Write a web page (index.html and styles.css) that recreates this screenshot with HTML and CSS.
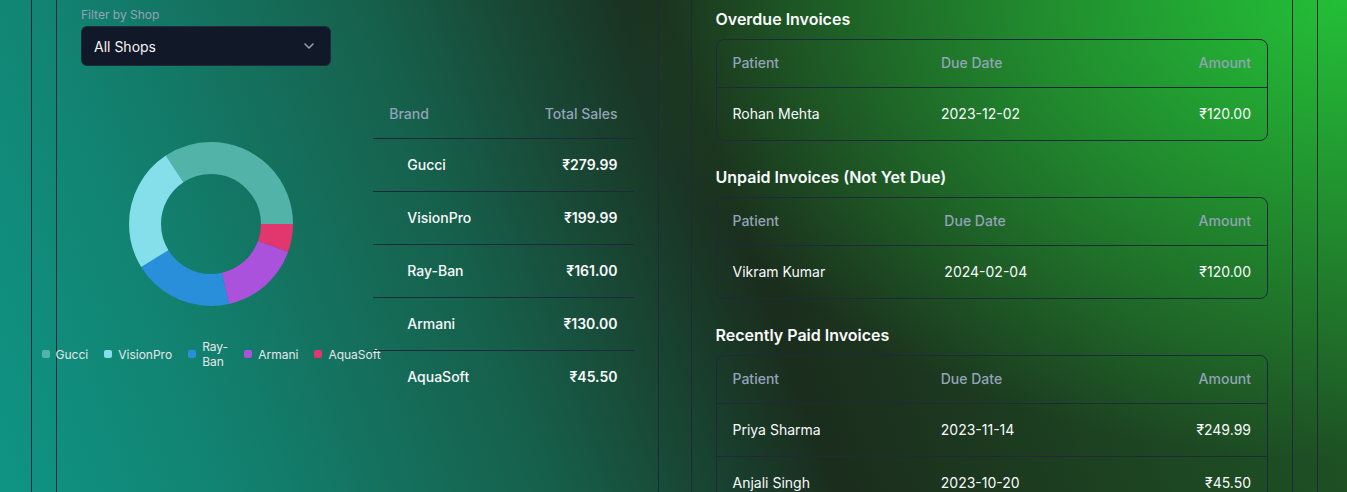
FILE: index.html
```html
<!DOCTYPE html>
<html lang="en">
<head>
<meta charset="utf-8">
<title>Sales &amp; Invoices</title>
<link rel="stylesheet" href="styles.css">
</head>
<body>
<div class="frame">
  <section class="panel">
    <div class="field-label">Filter by Shop</div>
    <div class="select">
      <span>All Shops</span>
      <svg class="chevron" width="10" height="6" viewBox="0 0 10 6"><path d="M1 1l4 4 4-4" fill="none" stroke="#9ca3af" stroke-width="1.5" stroke-linecap="round" stroke-linejoin="round"/></svg>
    </div>
    <div class="sales">
      <div class="chart">
        <svg class="donut" width="164" height="164" viewBox="0 0 164 164">
          <circle cx="82" cy="82" r="66" pathLength="360" stroke="#52b4a8" stroke-dasharray="123.45 360" stroke-dashoffset="-236.55"/>
          <circle cx="82" cy="82" r="66" pathLength="360" stroke="#e2366f" stroke-dasharray="20.06 360" stroke-dashoffset="0"/>
          <circle cx="82" cy="82" r="66" pathLength="360" stroke="#ab52dc" stroke-dasharray="57.32 360" stroke-dashoffset="-20.06"/>
          <circle cx="82" cy="82" r="66" pathLength="360" stroke="#2a8fdb" stroke-dasharray="70.99 360" stroke-dashoffset="-77.38"/>
          <circle cx="82" cy="82" r="66" pathLength="360" stroke="#84dfea" stroke-dasharray="88.18 360" stroke-dashoffset="-148.37"/>
        </svg>
        <ul class="legend">
          <li><i class="sw sw-gucci"></i><span>Gucci</span></li>
          <li><i class="sw sw-vision"></i><span>VisionPro</span></li>
          <li><i class="sw sw-rayban"></i><span>Ray-Ban</span></li>
          <li><i class="sw sw-armani"></i><span>Armani</span></li>
          <li><i class="sw sw-aqua"></i><span>AquaSoft</span></li>
        </ul>
      </div>
      <table class="brand-table">
        <thead><tr><th>Brand</th><th class="num">Total Sales</th></tr></thead>
        <tbody>
          <tr><td class="brand">Gucci</td><td class="num">₹279.99</td></tr>
          <tr><td class="brand">VisionPro</td><td class="num">₹199.99</td></tr>
          <tr><td class="brand">Ray-Ban</td><td class="num">₹161.00</td></tr>
          <tr><td class="brand">Armani</td><td class="num">₹130.00</td></tr>
          <tr><td class="brand">AquaSoft</td><td class="num">₹45.50</td></tr>
        </tbody>
      </table>
    </div>
  </section>

  <section class="panel">
    <div class="group">
      <h3>Overdue Invoices</h3>
      <div class="card">
        <table class="inv">
          <thead><tr><th>Patient</th><th>Due Date</th><th class="num">Amount</th></tr></thead>
          <tbody>
            <tr><td>Rohan Mehta</td><td>2023-12-02</td><td class="num">₹120.00</td></tr>
          </tbody>
        </table>
      </div>
    </div>
    <div class="group">
      <h3>Unpaid Invoices (Not Yet Due)</h3>
      <div class="card">
        <table class="inv">
          <thead><tr><th>Patient</th><th>Due Date</th><th class="num">Amount</th></tr></thead>
          <tbody>
            <tr><td>Vikram Kumar</td><td>2024-02-04</td><td class="num">₹120.00</td></tr>
          </tbody>
        </table>
      </div>
    </div>
    <div class="group">
      <h3>Recently Paid Invoices</h3>
      <div class="card">
        <table class="inv">
          <thead><tr><th>Patient</th><th>Due Date</th><th class="num">Amount</th></tr></thead>
          <tbody>
            <tr><td>Priya Sharma</td><td>2023-11-14</td><td class="num">₹249.99</td></tr>
            <tr><td>Anjali Singh</td><td>2023-10-20</td><td class="num">₹45.50</td></tr>
          </tbody>
        </table>
      </div>
    </div>
  </section>
</div>
</body>
</html>
```

FILE: styles.css
```css
* { box-sizing: border-box; }

html, body {
  margin: 0;
  height: 100%;
  overflow: hidden;
}

body {
  font-family: Inter, "Noto Sans", "Liberation Sans", sans-serif;
  color: #f8fafc;
  background:
    radial-gradient(ellipse 720px 460px at 100% 0%, rgba(36, 196, 56, 0.95), rgba(36, 196, 56, 0) 100%),
    linear-gradient(70deg, #0f9484 0%, #128473 14%, #16604b 36%, #1b2d1d 55%, #1d4722 78%, #1f5a26 100%);
}

.frame {
  margin: -18px 0 0 31px;
  width: 1287px;
  min-height: 700px;
  border-left: 1px solid #1e293b;
  border-right: 1px solid #1e293b;
  padding: 0 24px;
  display: grid;
  grid-template-columns: 1fr 1fr;
  gap: 32px;
}

.panel {
  border: 1px solid #1e293b;
  padding: 24px;
  min-height: 700px;
}

/* Filter */
.field-label {
  font-size: 12px;
  line-height: 16px;
  color: #94a3b8;
  margin-bottom: 3px;
}

.select {
  width: 250px;
  height: 40px;
  background: #111827;
  border: 1px solid #1f2a3a;
  border-radius: 6px;
  display: flex;
  align-items: center;
  justify-content: space-between;
  padding: 0 16px 0 12px;
  font-size: 14px;
  color: #f3f4f6;
}

/* Sales block */
.sales {
  margin-top: 24px;
  display: grid;
  grid-template-columns: 1fr 1fr;
  gap: 32px;
}

.chart {
  display: flex;
  flex-direction: column;
  align-items: center;
  min-width: 0;
}

.donut {
  display: block;
  margin-top: 52px;
}

.donut circle {
  fill: none;
  stroke-width: 32;
}

.legend {
  list-style: none;
  margin: 33px 0 0;
  padding: 0;
  width: 100%;
  display: flex;
  justify-content: center;
  align-items: center;
  gap: 16px;
  font-size: 12px;
  line-height: 15px;
  color: #e5e7eb;
}

.legend li {
  display: flex;
  align-items: center;
  gap: 6px;
}

.sw {
  display: block;
  width: 8px;
  height: 8px;
  border-radius: 2px;
  flex: none;
}
.sw-gucci { background: #52b4a8; }
.sw-vision { background: #84dfea; }
.sw-rayban { background: #2a8fdb; }
.sw-armani { background: #ab52dc; }
.sw-aqua { background: #e2366f; }

/* Tables */
table {
  width: 100%;
  border-collapse: collapse;
  font-size: 14px;
  line-height: 20px;
}

th {
  text-align: left;
  font-weight: 500;
  color: #94a3b8;
}

.num { text-align: right; }

.brand-table th {
  padding: 14px 16px;
  border-bottom: 1px solid #1e293b;
}

.brand-table td {
  padding: 16px;
  border-bottom: 1px solid #1e293b;
  font-weight: 600;
}

.brand-table tr:last-child td { border-bottom: none; }

.brand-table td.brand {
  padding-left: 34px;
  font-weight: 500;
}

/* Invoices */
.group + .group { margin-top: 24px; }

h3 {
  margin: 0 0 8px;
  font-size: 16px;
  line-height: 24px;
  font-weight: 600;
  color: #f8fafc;
}

.card {
  border: 1px solid #1e293b;
  border-radius: 8px;
  overflow: hidden;
}

.inv th {
  padding: 13px 16px 14px;
  border-bottom: 1px solid #1e293b;
}

.inv td {
  padding: 16px;
  border-bottom: 1px solid #1e293b;
  font-weight: 400;
}

.inv tr:last-child td { border-bottom: none; }
```
